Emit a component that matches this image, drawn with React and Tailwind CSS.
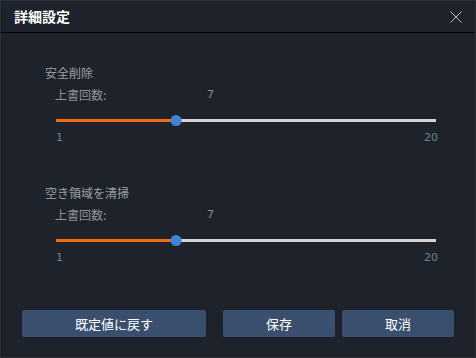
import { useState } from "react";

// One overwrite-count slider block
const Section = ({ title, value, onChange, className }) => {
  const pct = ((value - 1) / 19) * 100;
  return (
    <div className={className}>
      <div className="pl-[44px] text-[12px] leading-4 text-[#9ba0a7]">{title}</div>
      <div className="mt-[6px] flex pl-[54px] text-[12px] leading-4 text-[#8e939a]">
        <span className="w-[152px]">上書回数:</span>
        <span className="font-['DejaVu_Sans',sans-serif] text-[11px] text-[#8a9099]">{value}</span>
      </div>
      {/* Track */}
      <div className="relative ml-[55px] mt-[11px] h-3 w-[380px]">
        <div className="absolute left-0 right-0 top-[5px] h-[3px] bg-[#d4d4d4]" />
        <div
          className="absolute left-0 top-[5px] h-[3px] bg-[#f36b12]"
          style={{ width: `${pct}%` }}
        />
        <div
          className="absolute top-[1px] h-[11px] w-[11px] -translate-x-1/2 rounded-full bg-[#3f84d8]"
          style={{ left: `${pct}%` }}
        />
        <input
          type="range"
          min={1}
          max={20}
          value={value}
          onChange={(e) => onChange(Number(e.target.value))}
          className="absolute inset-0 w-full opacity-0"
        />
      </div>
      <div className="ml-[55px] mt-[4px] flex w-[382px] justify-between font-['DejaVu_Sans',sans-serif] text-[11px] leading-4 text-[#6f8596]">
        <span>1</span>
        <span>20</span>
      </div>
    </div>
  );
};

const App = () => {
  const [secure, setSecure] = useState(7);
  const [wipe, setWipe] = useState(7);

  return (
    <div className="flex h-[358px] w-[476px] flex-col border border-[#2a2f37] bg-[#1e232b] font-['Noto_Sans_CJK_JP','Noto_Sans',sans-serif]">
      {/* Header */}
      <div className="flex h-8 shrink-0 items-center justify-between border-b border-black pl-[13px] pr-[13px]">
        <span className="text-[14px] font-bold text-white">詳細設定</span>
        <svg width="12" height="12" viewBox="0 0 12 12" className="text-[#b9bdc2]">
          <path d="M0.5 0.5L11.5 11.5M11.5 0.5L0.5 11.5" stroke="currentColor" strokeWidth="1" />
        </svg>
      </div>

      <Section title="安全削除" value={secure} onChange={setSecure} className="mt-[32px]" />
      <Section title="空き領域を清掃" value={wipe} onChange={setWipe} className="mt-[39px]" />

      {/* Buttons */}
      <div className="mt-[44px] flex px-[21px] text-[13px] font-normal text-white">
        <button className="h-[27px] w-[184px] rounded-[2px] bg-[#394f6d]">既定値に戻す</button>
        <button className="ml-[17px] h-[27px] w-[112px] rounded-[2px] bg-[#394f6d]">保存</button>
        <button className="ml-[7px] h-[27px] w-[112px] rounded-[2px] bg-[#394f6d]">取消</button>
      </div>
    </div>
  );
};

export default App;
